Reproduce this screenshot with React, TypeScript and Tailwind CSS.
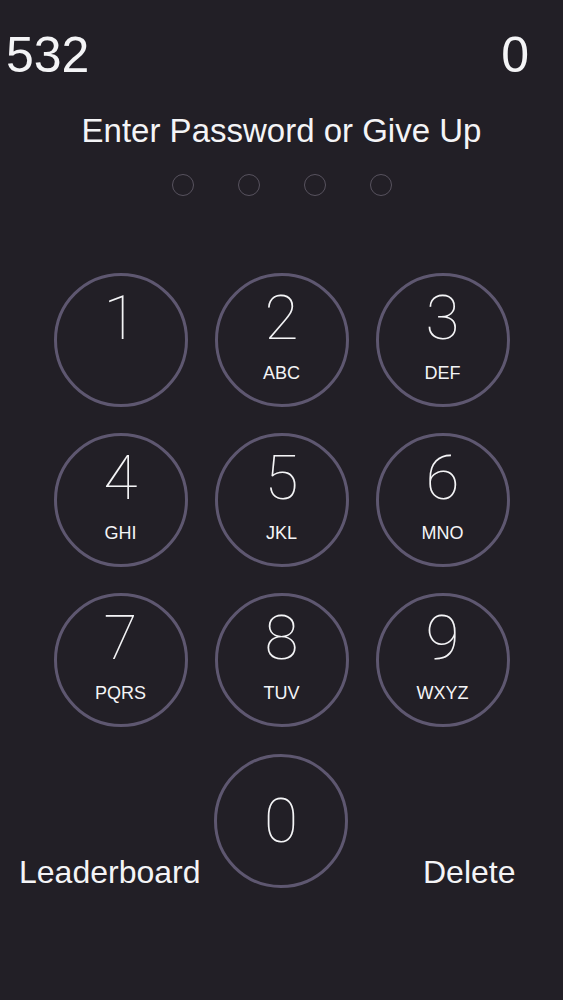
const keys: { digit: string; letters?: string }[] = [
  { digit: "1" },
  { digit: "2", letters: "ABC" },
  { digit: "3", letters: "DEF" },
  { digit: "4", letters: "GHI" },
  { digit: "5", letters: "JKL" },
  { digit: "6", letters: "MNO" },
  { digit: "7", letters: "PQRS" },
  { digit: "8", letters: "TUV" },
  { digit: "9", letters: "WXYZ" },
];

const sans = "font-['Liberation_Sans',Arial,sans-serif]";
const thin = "font-['Roboto',sans-serif] font-thin";

function Key({ digit, letters }: { digit: string; letters?: string }) {
  return (
    <button className="flex h-[134px] w-[134px] flex-col items-center rounded-full border-[3px] border-[#5e5770] pt-[11px] text-[#f4f4f6]">
      <span className={`${thin} text-[62px] leading-none`}>{digit}</span>
      {letters && <span className={`${sans} mt-[15px] text-[18px] leading-none`}>{letters}</span>}
    </button>
  );
}

export default function App() {
  const entered = 0;

  return (
    <main className={`${sans} min-h-[1000px] w-full bg-[#221f26] text-[#f4f4f6]`}>
      <div className="flex items-start justify-between pl-[6px] pr-[34px] pt-[30px]">
        <span className="text-[50px] leading-none">532</span>
        <span className="text-[50px] leading-none">0</span>
      </div>

      <h1 className="mt-[34px] text-center text-[33px] leading-none">Enter Password or Give Up</h1>

      <div className="mt-[27px] flex justify-center gap-[44px]">
        {[0, 1, 2, 3].map((i) => (
          <span
            key={i}
            className={`h-[22px] w-[22px] rounded-full border border-[#57525e] ${i < entered ? "bg-white" : ""}`}
          />
        ))}
      </div>

      <div className="mx-auto mt-[77px] grid w-[456px] grid-cols-3 gap-x-[27px] gap-y-[26px]">
        {keys.map((k) => (
          <Key key={k.digit} digit={k.digit} letters={k.letters} />
        ))}
      </div>

      <div className="mt-[27px] grid grid-cols-[214px_134px_1fr] items-end">
        <button className="justify-self-start pl-[19px] text-[32px] leading-none">Leaderboard</button>
        <button className="flex h-[134px] w-[134px] items-center justify-center rounded-full border-[3px] border-[#5e5770]">
          <span className={`${thin} text-[62px] leading-none`}>0</span>
        </button>
        <button className="justify-self-start pl-[75px] text-[32px] leading-none">Delete</button>
      </div>
    </main>
  );
}
